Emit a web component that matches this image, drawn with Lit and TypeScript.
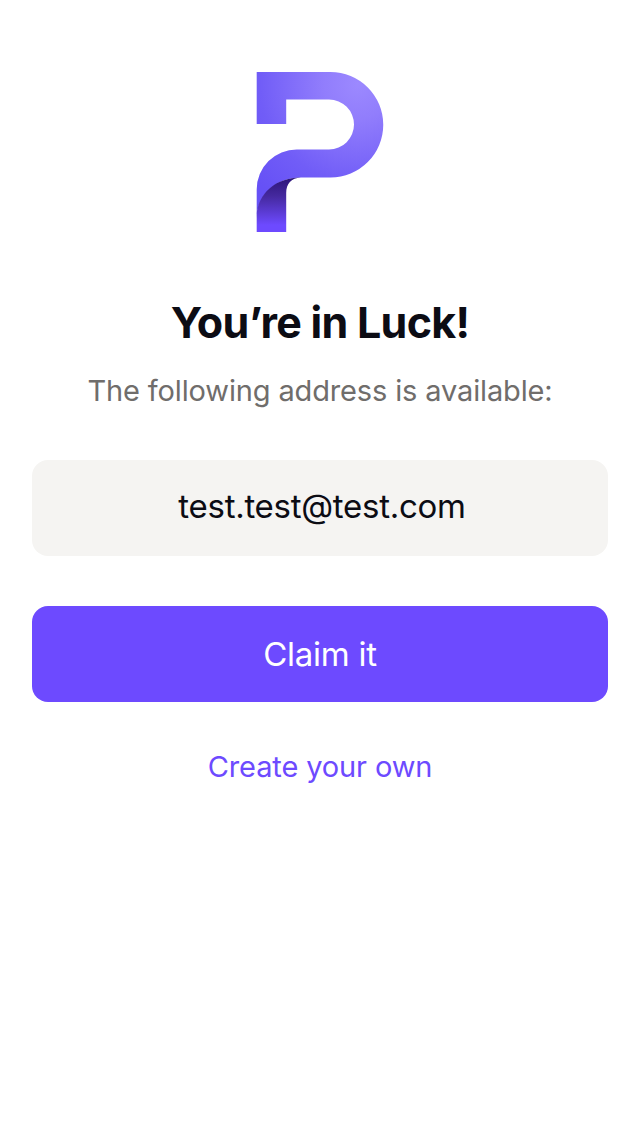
import { LitElement, html, css } from "lit";
import { customElement } from "lit/decorators.js";

@customElement("app-root")
export class AppRoot extends LitElement {
  static styles = css`
    :host {
      display: flex;
      flex-direction: column;
      align-items: stretch;
      box-sizing: border-box;
      min-height: 1136px;
      padding: 72px 32px 0;
      background: #fff;
      font-family: Inter, "Liberation Sans", sans-serif;
      text-align: center;
      color: #0c0c14;
    }
    .logo {
      display: block;
      width: 128px;
      height: 160px;
      margin: 0 auto;
    }
    h1 {
      margin: 64px 0 0;
      font-size: 43px;
      line-height: 52px;
      font-weight: 700;
      letter-spacing: -0.72px;
    }
    .subtitle {
      margin: 25px 0 0;
      font-size: 29px;
      line-height: 36px;
      letter-spacing: -0.14px;
      color: #706d6b;
    }
    .address,
    .claim {
      display: flex;
      align-items: center;
      justify-content: center;
      box-sizing: border-box;
      width: 100%;
      height: 96px;
      border-radius: 16px;
      font-size: 33px;
      line-height: 40px;
      letter-spacing: -0.27px;
    }
    .address {
      margin-top: 51px;
      padding: 0 0 4px 4px;
      background: #f5f4f2;
    }
    .claim {
      margin-top: 50px;
      padding: 0;
      border: 0;
      background: #6d4aff;
      color: #fff;
      font-family: inherit;
    }
    .create {
      align-self: center;
      margin-top: 47px;
      padding: 0;
      border: 0;
      background: none;
      color: #6d4aff;
      font-family: inherit;
      font-size: 29px;
      line-height: 36px;
      letter-spacing: -0.13px;
    }
  `;

  render() {
    return html`
      <svg class="logo" viewBox="256 72 128 160" aria-hidden="true">
        <defs>
          <radialGradient id="band" gradientUnits="userSpaceOnUse" cx="358" cy="84" r="140">
            <stop offset="0" stop-color="#9c89ff" />
            <stop offset="0.25" stop-color="#917dfc" />
            <stop offset="0.7" stop-color="#715df7" />
            <stop offset="1" stop-color="#6651f6" />
          </radialGradient>
          <linearGradient id="fold" gradientUnits="userSpaceOnUse" x1="0" y1="177" x2="0" y2="225">
            <stop offset="0" stop-color="#2c1478" />
            <stop offset="0.4" stop-color="#45299f" />
            <stop offset="1" stop-color="#6d4aff" />
          </linearGradient>
        </defs>
        <path
          fill="url(#band)"
          d="M256.700 124V72H330.5A52.75 52.75 0 0 1 330.5 177.5H301C276 177.5 256.700 195 256.700 219V189.5A40 40 0 0 1 297 149.5H329A25 25 0 0 0 329 99.5H286.200V124Z"
        />
        <path
          fill="url(#fold)"
          d="M256.700 232V215C258 194 275 177.500 301 177.500C291 178 286.200 184 286.200 193V232Z"
        />
      </svg>
      <h1>You’re in Luck!</h1>
      <p class="subtitle">The following address is available:</p>
      <div class="address">test.test@test.com</div>
      <button class="claim">Claim it</button>
      <button class="create">Create your own</button>
    `;
  }
}
